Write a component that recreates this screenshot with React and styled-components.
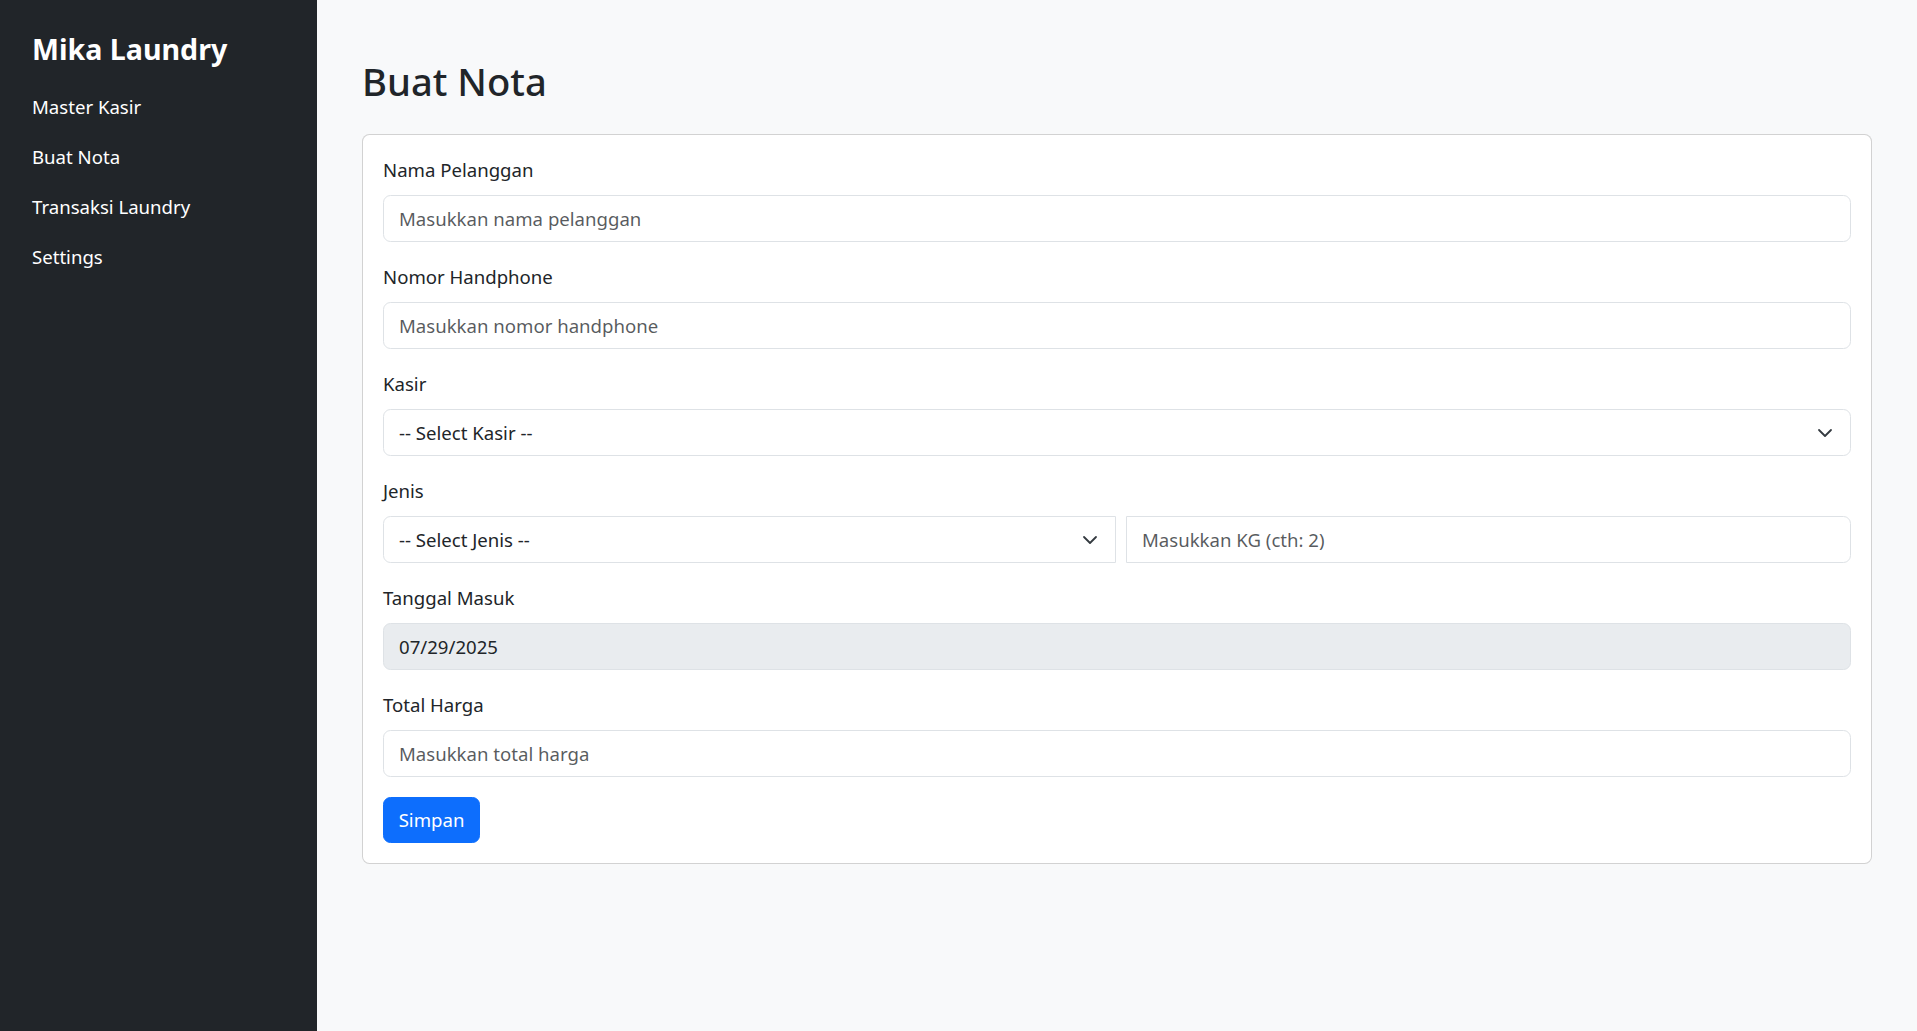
import React from "react";
import styled, { createGlobalStyle } from "styled-components";

const GlobalStyle = createGlobalStyle`
  *, *::before, *::after { box-sizing: border-box; }
  html, body { margin: 0; padding: 0; }
  body {
    font-family: "Noto Sans", "Open Sans", sans-serif;
    font-size: 18.6px;
    line-height: 1.5;
    color: #212529;
    background: #f8f9fa;
  }
`;

const Layout = styled.div`
  display: flex;
  min-height: 100vh;
`;

const Sidebar = styled.aside`
  width: 317px;
  flex: 0 0 317px;
  background: #212529;
  color: #fff;
  padding: 31px 20px 20px 32px;
`;

const Brand = styled.h4`
  margin: 0 0 15px;
  font-size: 28.6px;
  line-height: 36px;
  font-weight: 700;
  color: #fff;
`;

const Nav = styled.nav`
  display: flex;
  flex-direction: column;
`;

const NavLink = styled.a`
  display: block;
  padding: 10px 0;
  font-size: 18.6px;
  line-height: 30px;
  color: #fff;
  text-decoration: none;
`;

const Main = styled.main`
  flex: 1;
  padding: 57px 45px 45px;
  background: #f8f9fa;
`;

const Title = styled.h2`
  margin: 0 0 29px;
  font-size: 38.2px;
  line-height: 48px;
  font-weight: 500;
  color: #212529;
`;

const Card = styled.div`
  background: #fff;
  border: 1px solid rgba(0, 0, 0, 0.175);
  border-radius: 7.5px;
  padding: 20px;
`;

const Field = styled.div`
  margin-bottom: 20px;
`;

const Label = styled.label`
  display: block;
  margin-bottom: 10px;
  font-size: 18.6px;
  line-height: 30px;
  color: #212529;
`;

const Input = styled.input`
  display: block;
  width: 100%;
  height: 47px;
  padding: 7.5px 15px;
  font-family: inherit;
  font-size: 18.6px;
  line-height: 30px;
  color: #212529;
  background: ${(p) => (p.disabled ? "#e9ecef" : "#fff")};
  border: 1px solid #dee2e6;
  border-radius: ${(p) => p.$radius || "7.5px"};
  outline: none;
  &::placeholder { color: rgba(33, 37, 41, 0.75); opacity: 1; }
`;

const SelectWrap = styled.div`
  position: relative;
  width: ${(p) => p.$width || "100%"};
  flex: ${(p) => (p.$width ? `0 0 ${p.$width}` : "1 1 auto")};
`;

const Select = styled.select`
  display: block;
  width: 100%;
  height: 47px;
  padding: 7.5px 50px 7.5px 15px;
  font-family: inherit;
  font-size: 18.6px;
  line-height: 30px;
  color: #212529;
  background: #fff;
  border: 1px solid #dee2e6;
  border-radius: ${(p) => p.$radius || "7.5px"};
  appearance: none;
  -webkit-appearance: none;
  outline: none;
`;

const Chevron = styled.svg`
  position: absolute;
  right: 18px;
  top: 50%;
  width: 16px;
  height: 12px;
  margin-top: -6px;
  pointer-events: none;
`;

const Row = styled.div`
  display: flex;
  gap: 10px;
`;

const Button = styled.button`
  display: inline-block;
  width: 97px;
  height: 46px;
  padding: 0;
  font-family: inherit;
  font-size: 18.6px;
  line-height: 30px;
  color: #fff;
  background: #0d6efd;
  border: 1px solid #0d6efd;
  border-radius: 7.5px;
  cursor: pointer;
`;

const Arrow = () => (
  <Chevron viewBox="0 0 16 12" fill="none">
    <path
      d="M2 3l6 6 6-6"
      stroke="#343a40"
      strokeWidth="1.8"
      strokeLinecap="round"
      strokeLinejoin="round"
    />
  </Chevron>
);

export default function App() {
  return (
    <>
      <GlobalStyle />
      <Layout>
        <Sidebar>
          <Brand>Mika Laundry</Brand>
          <Nav>
            <NavLink href="#">Master Kasir</NavLink>
            <NavLink href="#">Buat Nota</NavLink>
            <NavLink href="#">Transaksi Laundry</NavLink>
            <NavLink href="#">Settings</NavLink>
          </Nav>
        </Sidebar>
        <Main>
          <Title>Buat Nota</Title>
          <Card>
            <Field>
              <Label>Nama Pelanggan</Label>
              <Input placeholder="Masukkan nama pelanggan" />
            </Field>
            <Field>
              <Label>Nomor Handphone</Label>
              <Input placeholder="Masukkan nomor handphone" />
            </Field>
            <Field>
              <Label>Kasir</Label>
              <SelectWrap>
                <Select defaultValue="">
                  <option value="">-- Select Kasir --</option>
                </Select>
                <Arrow />
              </SelectWrap>
            </Field>
            <Field>
              <Label>Jenis</Label>
              <Row>
                <SelectWrap $width="733px">
                  <Select defaultValue="" $radius="7.5px 0 0 7.5px">
                    <option value="">-- Select Jenis --</option>
                  </Select>
                  <Arrow />
                </SelectWrap>
                <Input placeholder="Masukkan KG (cth: 2)" $radius="0 7.5px 7.5px 0" />
              </Row>
            </Field>
            <Field>
              <Label>Tanggal Masuk</Label>
              <Input value="07/29/2025" disabled readOnly />
            </Field>
            <Field>
              <Label>Total Harga</Label>
              <Input placeholder="Masukkan total harga" />
            </Field>
            <Button type="button">Simpan</Button>
          </Card>
        </Main>
      </Layout>
    </>
  );
}
